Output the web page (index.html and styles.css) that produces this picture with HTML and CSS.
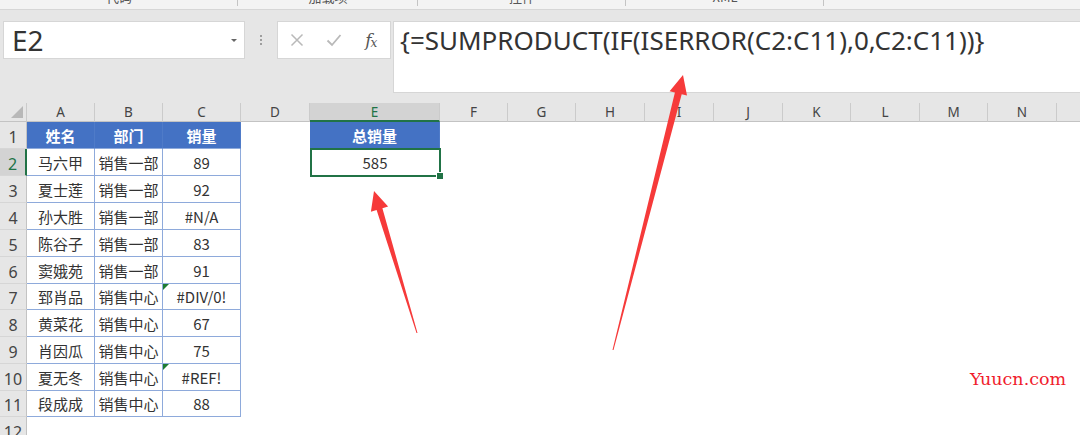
FILE: index.html
```html
<!DOCTYPE html>
<html lang="zh">
<head>
<meta charset="utf-8">
<title>Excel</title>
<link rel="stylesheet" href="styles.css">
</head>
<body>
<div class="app">
  <div class="ribbon">
    <div class="grp g1"><span>代码</span></div>
    <div class="grp g2"><span>加载项</span></div>
    <div class="grp g3"><span>控件</span></div>
    <div class="grp g4"><span>XML</span></div>
  </div>

  <div class="fbar">
    <div class="namebox"><span class="ref">E2</span><span class="caret"></span></div>
    <div class="grip"><i></i><i></i><i></i></div>
    <div class="btns">
      <span class="btn"><svg width="14" height="14" viewBox="0 0 14 14"><path d="M1.5 1.5 L12.5 12.5 M12.5 1.5 L1.5 12.5" stroke="#b9b9b9" stroke-width="1.5" fill="none"/></svg></span>
      <span class="btn"><svg width="16" height="14" viewBox="0 0 16 14"><path d="M1.5 7.5 L6 12 L14.5 2" stroke="#b9b9b9" stroke-width="1.8" fill="none"/></svg></span>
      <span class="btn fx"><i>f</i><i class="x">x</i></span>
    </div>
    <div class="formula"><span class="ftext">{=SUMPRODUCT(IF(ISERROR(C2:C11),0,C2:C11))}</span></div>
  </div>

  <div class="sheet">
    <div class="ch corner"></div>
    <div class="ch">A</div><div class="ch">B</div><div class="ch">C</div><div class="ch">D</div>
    <div class="ch sel">E</div><div class="ch">F</div><div class="ch">G</div><div class="ch">H</div>
    <div class="ch">I</div><div class="ch">J</div><div class="ch">K</div><div class="ch">L</div>
    <div class="ch">M</div><div class="ch">N</div><div class="ch"></div>

    <div class="rh">1</div>
    <div class="c h">姓名</div><div class="c h">部门</div><div class="c h">销量</div>
    <div class="blank"></div><div class="c h">总销量</div><div class="fill10"></div>

    <div class="rh sel">2</div>
    <div class="c">马六甲</div><div class="c">销售一部</div><div class="c">89</div>
    <div class="blank"></div><div class="c active">585</div><div class="fill10"></div>

    <div class="rh">3</div>
    <div class="c">夏士莲</div><div class="c">销售一部</div><div class="c">92</div><div class="fill12"></div>

    <div class="rh">4</div>
    <div class="c">孙大胜</div><div class="c">销售一部</div><div class="c">#N/A</div><div class="fill12"></div>

    <div class="rh">5</div>
    <div class="c">陈谷子</div><div class="c">销售一部</div><div class="c">83</div><div class="fill12"></div>

    <div class="rh">6</div>
    <div class="c">窦娥苑</div><div class="c">销售一部</div><div class="c">91</div><div class="fill12"></div>

    <div class="rh">7</div>
    <div class="c">郅肖品</div><div class="c">销售中心</div><div class="c flag">#DIV/0!</div><div class="fill12"></div>

    <div class="rh">8</div>
    <div class="c">黄菜花</div><div class="c">销售中心</div><div class="c">67</div><div class="fill12"></div>

    <div class="rh">9</div>
    <div class="c">肖因瓜</div><div class="c">销售中心</div><div class="c">75</div><div class="fill12"></div>

    <div class="rh">10</div>
    <div class="c">夏无冬</div><div class="c">销售中心</div><div class="c flag">#REF!</div><div class="fill12"></div>

    <div class="rh">11</div>
    <div class="c">段成成</div><div class="c">销售中心</div><div class="c">88</div><div class="fill12"></div>

    <div class="rh">12</div><div class="fill15"></div>
  </div>

  <svg class="arrows" width="1080" height="435" viewBox="0 0 1080 435">
    <polygon fill="#f63a3a" points="374,191 388.1,206.6 382.4,208.3 417.5,332.9 416.5,333.1 376.6,210.1 370.9,211.8"/>
    <polygon fill="#f63a3a" points="683,75 687,95.6 681.7,94.3 613.5,350.1 612.5,349.9 674.9,92.5 669.6,91.2"/>
  </svg>

  <div class="wm">Yuucn.com</div>
</div>
</body>
</html>
```

FILE: styles.css
```css
* { box-sizing: border-box; margin: 0; padding: 0; }
html, body { width: 1080px; height: 435px; overflow: hidden; }
body {
  background: #e6e6e6;
  font-family: "Noto Sans", "Noto Sans CJK SC", sans-serif;
  color: #333;
}
.app { position: relative; width: 1080px; height: 435px; overflow: hidden; }

/* ribbon group labels (cut off) */
.ribbon {
  display: flex;
  height: 10px;
  background: #f3f3f3;
  border-bottom: 1px solid #d6d6d6;
  overflow: hidden;
}
.grp {
  position: relative;
  display: flex;
  justify-content: center;
  font-family: "Noto Sans CJK SC", sans-serif;
  font-size: 13px;
  color: #555;
}
.grp span { display: block; line-height: 16px; margin-top: -11px; }
.grp::after {
  content: "";
  position: absolute;
  right: 0; top: 0;
  width: 1px; height: 6px;
  background: #c4c4c4;
}
.g1 { width: 238px; }
.g2 { width: 180px; }
.g3 { width: 208px; }
.g4 { width: 198px; }

/* formula bar */
.fbar {
  display: flex;
  align-items: flex-start;
  height: 93px;
  padding-top: 11px;
}
.namebox {
  display: flex;
  align-items: center;
  margin-left: 3px;
  width: 242px;
  height: 38px;
  padding-left: 8px;
  background: #fff;
  border: 1px solid #d6d6d6;
}
.ref { font-size: 28px; line-height: 36px; color: #333; }
.caret {
  margin-left: auto;
  margin-right: 7px;
  width: 0; height: 0;
  border-left: 3.5px solid transparent;
  border-right: 3.5px solid transparent;
  border-top: 3.5px solid #666;
}
.grip {
  width: 32px;
  height: 38px;
  display: flex;
  flex-direction: column;
  align-items: center;
  justify-content: center;
  gap: 2px;
}
.grip i { display: block; width: 2px; height: 2px; background: #9e9e9e; }
.btns {
  display: grid;
  grid-template-columns: repeat(3, 1fr);
  width: 114px;
  height: 38px;
  background: #fff;
  border: 1px solid #d6d6d6;
}
.btn { display: flex; align-items: center; justify-content: center; }
.fx {
  font-family: "DejaVu Serif", "Liberation Serif", serif;
  font-style: italic;
  color: #555;
  font-size: 17px;
  line-height: 1;
}
.fx i { font-style: italic; }
.fx .x { font-size: 12px; margin-top: 6px; margin-left: -1px; }
.formula {
  flex: 1;
  margin-left: 2px;
  margin-right: -4px;
  height: 72px;
  background: #fff;
  border: 1px solid #d6d6d6;
  padding-left: 6px;
}
.ftext {
  display: block;
  font-size: 26px;
  line-height: 36px;
  color: #333;
  white-space: nowrap;
}

/* sheet grid */
.sheet {
  display: grid;
  grid-template-columns: 27px 68px 68px 78px 69px 130px 68px 68px 69px 69px 69px 68px 69px 68px 69px 60px;
  grid-template-rows: 19px repeat(6, 27px) 26px 27px 27px 27px 26px 27px;
  background: #fff;
}
.ch {
  display: flex;
  align-items: center;
  justify-content: center;
  background: #e6e6e6;
  border-right: 1px solid #cbcbcb;
  border-bottom: 1px solid #c3c3c3;
  font-size: 13.5px;
  color: #444;
}
.ch.sel {
  background: #d3d3d3;
  color: #217346;
  border-bottom: 2px solid #217346;
}
.corner { position: relative; }
.corner::after {
  content: "";
  position: absolute;
  right: 3px; bottom: 3px;
  width: 0; height: 0;
  border-left: 12px solid transparent;
  border-bottom: 12px solid #b8b8b8;
}
.rh {
  display: flex;
  align-items: flex-end;
  justify-content: center;
  padding-bottom: 1px;
  background: #e6e6e6;
  border-right: 1px solid #c3c3c3;
  border-bottom: 1px solid #d6d6d6;
  font-size: 16px;
  line-height: 20px;
  color: #444;
}
.rh.sel {
  background: #d3d3d3;
  color: #217346;
  border-right: 2px solid #217346;
}
.c {
  position: relative;
  display: flex;
  align-items: center;
  justify-content: center;
  border-right: 1px solid #8eaadb;
  border-bottom: 1px solid #8eaadb;
  font-family: "Noto Sans CJK SC", sans-serif;
  font-size: 15px;
  color: #333;
  white-space: nowrap;
}
.c.h {
  background: #4472c4;
  color: #fff;
  font-weight: bold;
  border-right-color: #4f7bc8;
  border-bottom-color: #8eaadb;
}
.c.active { border: none; }
.c.active::after {
  content: "";
  position: absolute;
  left: 0; top: -1px; right: -1px; bottom: -1px;
  border: 2px solid #217346;
}
.c.active::before {
  content: "";
  position: absolute;
  right: -4px; bottom: -4px;
  width: 6px; height: 6px;
  background: #217346;
  border: 1px solid #fff;
  z-index: 1;
}
.c.flag::before {
  content: "";
  position: absolute;
  left: 0; top: 0;
  width: 0; height: 0;
  border-top: 6px solid #1e7b32;
  border-right: 6px solid transparent;
}
.blank { background: #fff; }
.fill10 { grid-column: span 10; }
.fill12 { grid-column: span 12; }
.fill15 { grid-column: span 15; }

/* overlays */
.arrows { position: absolute; left: 0; top: 0; pointer-events: none; }
.wm {
  position: absolute;
  left: 970px;
  top: 369px;
  font-family: "DejaVu Serif", serif;
  font-size: 17.5px;
  color: #f01c2c;
}
```
